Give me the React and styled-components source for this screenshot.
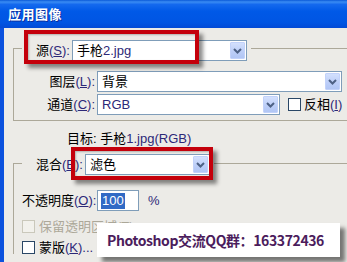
import React from "react";
import styled, { createGlobalStyle } from "styled-components";

const BG = "#ecebe7";

const Global = createGlobalStyle`
  html, body { margin: 0; padding: 0; background: ${BG}; }
  body { font-family: "Liberation Sans", "Noto Sans CJK SC", sans-serif; }
`;

const Root = styled.div`
  position: relative;
  width: 347px;
  height: 262px;
  overflow: hidden;
  display: flex;
  flex-direction: column;
  background: ${BG};
  font-size: 13px;
  line-height: 16px;
  color: #000;
`;

const TitleBar = styled.div`
  height: 28px;
  flex: none;
  display: flex;
  align-items: center;
  padding-left: 8px;
  background: linear-gradient(
    to bottom,
    #0a5ad8 0%,
    #3a8cf3 7%,
    #1469ee 16%,
    #0059e7 40%,
    #0055e3 80%,
    #024ad6 100%
  );
  color: #fff;
  font-weight: bold;
  font-size: 13px;
  font-family: "Noto Sans CJK SC", sans-serif;
  letter-spacing: 0.5px;
  text-shadow: 1px 1px 0 #0b2f9e;
`;

const Frame = styled.div`
  flex: 1;
  display: flex;
  flex-direction: column;
  border-left: 4px solid #0b52de;
`;

const Group = styled.div`
  margin: ${(p) => p.$mt}px 0 0 9px;
  border: 1px solid #aca899;
  border-right: none;
  ${(p) => (p.$open ? "border-bottom: none;" : "")}
  padding-bottom: ${(p) => p.$pb || 0}px;
  display: flex;
  flex-direction: column;
`;

const Legend = styled.div`
  position: relative;
  align-self: flex-start;
  display: flex;
  align-items: center;
  gap: 2px;
  margin: ${(p) => p.$mt}px 0 0 8px;
  padding: 0 4px 0 14px;
  background: ${BG};
  white-space: nowrap;
`;

const Row = styled.div`
  display: flex;
  align-items: center;
  height: 21px;
  margin-top: ${(p) => p.$mt}px;
`;

const FieldLabel = styled.span`
  flex: none;
  width: ${(p) => p.$w || 81}px;
  margin-left: ${(p) => p.$ml || 0}px;
  margin-right: 2px;
  text-align: right;
  white-space: nowrap;
`;

const Lat = styled.span`
  color: #2c2878;
`;

const Key = styled.span`
  color: #2c2878;
  text-decoration: underline;
  text-underline-offset: 1px;
`;

const ComboBox = styled.div`
  flex: none;
  box-sizing: border-box;
  width: ${(p) => p.$w}px;
  height: 21px;
  border: 1px solid #7f9db9;
  background: #fff;
  display: flex;
  align-items: center;
`;

const ComboText = styled.span`
  flex: 1;
  padding-left: 4px;
  white-space: nowrap;
  overflow: hidden;
`;

const DropButton = styled.div`
  flex: none;
  box-sizing: border-box;
  width: 15px;
  height: 17px;
  margin-right: 1px;
  border: 1px solid #c2d2fa;
  border-radius: 1px;
  background: linear-gradient(to bottom, #d3e0fd, #bccef8 60%, #b1c6f5);
  display: flex;
  align-items: center;
  justify-content: center;
`;

const Chevron = () => (
  <svg width="9" height="6" viewBox="0 0 9 6">
    <path d="M1 1 L4.5 4.5 L8 1" fill="none" stroke="#4d6185" strokeWidth="2" />
  </svg>
);

const Combo = ({ w, children }) => (
  <ComboBox $w={w}>
    <ComboText>{children}</ComboText>
    <DropButton>
      <Chevron />
    </DropButton>
  </ComboBox>
);

const CheckBox = styled.span`
  flex: none;
  box-sizing: border-box;
  width: 13px;
  height: 13px;
  border: 1px solid ${(p) => (p.$disabled ? "#cac8bb" : "#2a4766")};
  background: ${(p) => (p.$disabled ? "#f2f1ec" : "#fff")};
`;

const CheckLabel = styled.label`
  display: flex;
  align-items: center;
  gap: ${(p) => p.$gap || 3}px;
  margin-left: ${(p) => p.$ml || 0}px;
  white-space: nowrap;
  color: ${(p) => (p.$disabled ? "#aca899" : "#000")};
`;

const CheckRow = styled.div`
  display: flex;
  align-items: center;
  height: 13px;
  margin-top: ${(p) => p.$mt}px;
  padding-left: 8px;
`;

const TargetLine = styled.div`
  margin: 10px 0 0 63px;
  white-space: nowrap;
`;

const NumberBox = styled.div`
  flex: none;
  box-sizing: border-box;
  width: 42px;
  height: 21px;
  border: 1px solid #7f9db9;
  background: #fff;
  display: flex;
  align-items: center;
  padding-left: 3px;
`;

const Selected = styled.span`
  background: #316ac5;
  color: #fff;
  padding: 0 1px;
`;

const Unit = styled.span`
  margin-left: 9px;
  color: #2c2878;
`;

const RedMark = styled.div`
  position: absolute;
  box-sizing: border-box;
  left: ${(p) => p.$x}px;
  top: ${(p) => p.$y}px;
  width: ${(p) => p.$w}px;
  height: ${(p) => p.$h}px;
  border: 4px solid #c4000b;
  box-shadow: 4px 4px 4px rgba(0, 0, 0, 0.45), inset 1px 1px 2px rgba(0, 0, 0, 0.25);
  pointer-events: none;
`;

const Watermark = styled.div`
  position: absolute;
  left: 97px;
  top: 223px;
  width: 243px;
  height: 34px;
  box-sizing: border-box;
  background: #fff;
  box-shadow: 5px 5px 4px rgba(0, 0, 0, 0.5);
  display: flex;
  align-items: center;
  padding-left: 10px;
  font-family: "Noto Sans CJK SC", sans-serif;
  font-weight: bold;
  font-size: 14px;
  letter-spacing: -0.4px;
  color: #4b1c5c;
  white-space: nowrap;
`;

export default function App() {
  return (
    <Root>
      <Global />
      <TitleBar>应用图像</TitleBar>
      <Frame>
        <Group $mt={20} $pb={5}>
          <Legend $mt={-9}>
            <span>
              源<Lat>(</Lat>
              <Key>S</Key>
              <Lat>):</Lat>
            </span>
            <Combo w={175}>
              手枪<Lat>2.jpg</Lat>
            </Combo>
            <RedMark $x={2} $y={-10} $w={175} $h={34} />
          </Legend>
          <Row $mt={10}>
            <FieldLabel>
              图层<Lat>(</Lat>
              <Key>L</Key>
              <Lat>):</Lat>
            </FieldLabel>
            <Combo w={245}>背景</Combo>
          </Row>
          <Row $mt={2}>
            <FieldLabel>
              通道<Lat>(</Lat>
              <Key>C</Key>
              <Lat>):</Lat>
            </FieldLabel>
            <Combo w={183}>
              <Lat>RGB</Lat>
            </Combo>
            <CheckLabel $ml={8}>
              <CheckBox />
              <span>
                反相<Lat>(</Lat>
                <Key>I</Key>
                <Lat>)</Lat>
              </span>
            </CheckLabel>
          </Row>
        </Group>

        <TargetLine>
          目标: 手枪<Lat>1.jpg(RGB)</Lat>
        </TargetLine>

        <Group $mt={16} $open>
          <Legend $mt={-10}>
            <span>
              混合<Lat>(</Lat>
              <Key>B</Key>
              <Lat>):</Lat>
            </span>
            <Combo w={125}>滤色</Combo>
            <RedMark $x={49} $y={-7} $w={142} $h={33} />
          </Legend>
          <Row $mt={15}>
            <FieldLabel $w={73} $ml={8}>
              不透明度<Lat>(</Lat>
              <Key>O</Key>
              <Lat>):</Lat>
            </FieldLabel>
            <NumberBox>
              <Selected>100</Selected>
            </NumberBox>
            <Unit>%</Unit>
          </Row>
          <CheckRow $mt={9}>
            <CheckLabel $disabled $gap={4}>
              <CheckBox $disabled />
              <span>保留透明区域(T)</span>
            </CheckLabel>
          </CheckRow>
          <CheckRow $mt={8}>
            <CheckLabel $gap={4}>
              <CheckBox />
              <span>
                蒙版<Lat>(</Lat>
                <Key>K</Key>
                <Lat>)...</Lat>
              </span>
            </CheckLabel>
          </CheckRow>
        </Group>
      </Frame>
      <Watermark>Photoshop交流QQ群：163372436</Watermark>
    </Root>
  );
}
